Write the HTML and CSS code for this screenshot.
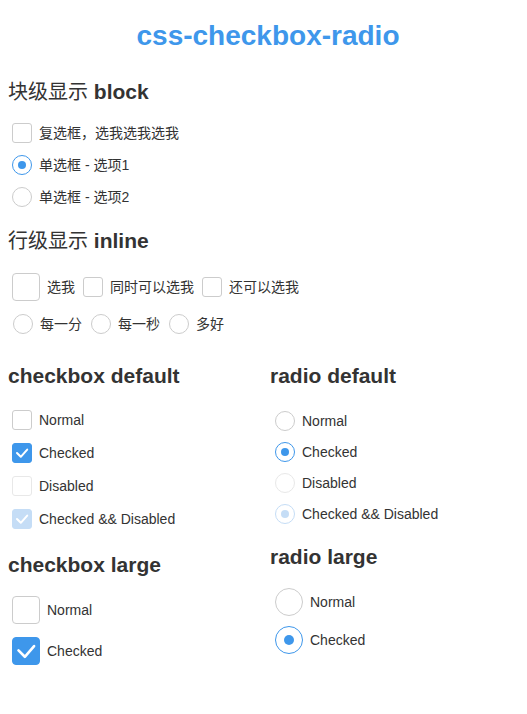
FILE: index.html
```html
<!DOCTYPE html>
<html lang="zh">
<head>
<meta charset="utf-8">
<title>css-checkbox-radio</title>
<link rel="stylesheet" href="styles.css">
</head>
<body>
<h1 class="title">css-checkbox-radio</h1>

<h2 class="sec sec-block"><span class="cjk">块级显示</span> block</h2>
<div class="block-list">
  <label class="opt"><span class="cb"></span><span>复选框，选我选我选我</span></label>
  <label class="opt"><span class="rd on"></span><span>单选框 - 选项1</span></label>
  <label class="opt"><span class="rd"></span><span>单选框 - 选项2</span></label>
</div>

<h2 class="sec sec-inline"><span class="cjk">行级显示</span> inline</h2>
<div class="inline-row row-cb">
  <label class="iopt"><span class="cb lg"></span><span>选我</span></label>
  <label class="iopt"><span class="cb"></span><span>同时可以选我</span></label>
  <label class="iopt"><span class="cb"></span><span>还可以选我</span></label>
</div>
<div class="inline-row row-rd">
  <label class="iopt"><span class="rd"></span><span>每一分</span></label>
  <label class="iopt"><span class="rd"></span><span>每一秒</span></label>
  <label class="iopt"><span class="rd"></span><span>多好</span></label>
</div>

<div class="cols">
  <section class="col col-left">
    <h2 class="sec">checkbox default</h2>
    <div class="list list-cb">
      <label class="opt"><span class="cb"></span><span>Normal</span></label>
      <label class="opt"><span class="cb on"><svg viewBox="1 1 18 18"><polyline points="5,10 8.8,13.8 15.2,6.6" /></svg></span><span>Checked</span></label>
      <label class="opt"><span class="cb dis"></span><span>Disabled</span></label>
      <label class="opt"><span class="cb on dis"><svg viewBox="1 1 18 18"><polyline points="5,10 8.8,13.8 15.2,6.6" /></svg></span><span>Checked &amp;&amp; Disabled</span></label>
    </div>
    <h2 class="sec sec-large-l">checkbox large</h2>
    <div class="list list-cb-lg">
      <label class="opt"><span class="cb lg"></span><span>Normal</span></label>
      <label class="opt"><span class="cb lg on"><svg viewBox="1 1 18 18"><polyline points="4.8,9.6 9.2,14 15.6,6.6" /></svg></span><span>Checked</span></label>
    </div>
  </section>
  <section class="col col-right">
    <h2 class="sec">radio default</h2>
    <div class="list list-rd">
      <label class="opt"><span class="rd"></span><span>Normal</span></label>
      <label class="opt"><span class="rd on"></span><span>Checked</span></label>
      <label class="opt"><span class="rd dis"></span><span>Disabled</span></label>
      <label class="opt"><span class="rd on dis"></span><span>Checked &amp;&amp; Disabled</span></label>
    </div>
    <h2 class="sec sec-large-r">radio large</h2>
    <div class="list list-rd-lg">
      <label class="opt"><span class="rd lg"></span><span>Normal</span></label>
      <label class="opt"><span class="rd lg on"></span><span>Checked</span></label>
    </div>
  </section>
</div>
</body>
</html>
```

FILE: styles.css
```css
html, body {
  background: #fff;
}
body {
  margin: 8px;
  font-family: "Liberation Sans", Arial, "Noto Sans CJK SC", sans-serif;
  color: #333;
  font-size: 14px;
}
.title {
  margin: 10px 0 0;
  padding-left: 9px;
  text-align: center;
  font-size: 28px;
  line-height: 36px;
  font-weight: bold;
  color: #3e97eb;
}
.sec {
  margin: 0;
  font-size: 21px;
  line-height: 28px;
  height: 28px;
  font-weight: bold;
  color: #333;
}
.cjk {
  font-family: "Noto Sans CJK SC", sans-serif;
  font-weight: 400;
  font-size: 20px;
}
.sec-block { margin-top: 23px; }
.sec-inline { margin-top: 13px; }

.block-list { margin-top: 12px; }

.opt {
  display: flex;
  align-items: center;
  gap: 7px;
  height: 32px;
  padding-left: 4px;
  font-size: 14px;
  line-height: 16px;
}

.inline-row {
  display: flex;
  align-items: center;
  gap: 8px;
  padding-left: 4px;
}
.row-cb { height: 36px; margin-top: 15px; }
.row-rd { height: 32px; margin-top: 3px; gap: 9px; padding-left: 5px; }
.iopt {
  display: flex;
  align-items: center;
  gap: 7px;
  font-size: 14px;
  line-height: 16px;
}

.cols {
  display: grid;
  grid-template-columns: 262px 1fr;
  margin-top: 22px;
}
.list-cb { margin-top: 13px; }
.list-cb .opt { height: 33px; }
.sec-large-l { margin-top: 16px; }
.list-cb-lg { margin-top: 10px; }
.list-cb-lg .opt { height: 41px; }

.col-right .opt { padding-left: 5px; }
.list-rd { margin-top: 15px; }
.list-rd .opt { height: 31px; }
.sec-large-r { margin-top: 14px; }
.list-rd-lg { margin-top: 12px; }
.list-rd-lg .opt { height: 38px; }

/* checkbox */
.cb {
  flex: none;
  display: block;
  width: 20px;
  height: 20px;
  box-sizing: border-box;
  border: 1px solid #cccccc;
  border-radius: 3px;
  background: #fff;
}
.cb.lg {
  width: 28px;
  height: 28px;
  border-radius: 4px;
}
.cb.on {
  background: #3e97eb;
  border-color: #3e97eb;
}
.cb.dis {
  border-color: #e8e8e8;
}
.cb.on.dis {
  background: #c5ddf6;
  border-color: #c5ddf6;
}
.cb svg {
  display: block;
  width: 100%;
  height: 100%;
}
.cb polyline {
  fill: none;
  stroke: #fff;
  stroke-width: 2;
  stroke-linecap: round;
  stroke-linejoin: round;
}
.cb.lg polyline { stroke-width: 1.8; }

/* radio */
.rd {
  flex: none;
  display: flex;
  align-items: center;
  justify-content: center;
  width: 20px;
  height: 20px;
  box-sizing: border-box;
  border: 1px solid #cccccc;
  border-radius: 50%;
  background: #fff;
}
.rd.lg {
  width: 28px;
  height: 28px;
}
.rd.on { border-color: #3e97eb; }
.rd.on::after {
  content: "";
  width: 8px;
  height: 8px;
  border-radius: 50%;
  background: #3e97eb;
}
.rd.lg.on::after {
  width: 10px;
  height: 10px;
}
.rd.dis { border-color: #e8e8e8; }
.rd.on.dis { border-color: #c5ddf6; }
.rd.on.dis::after { background: #c5ddf6; }
```
